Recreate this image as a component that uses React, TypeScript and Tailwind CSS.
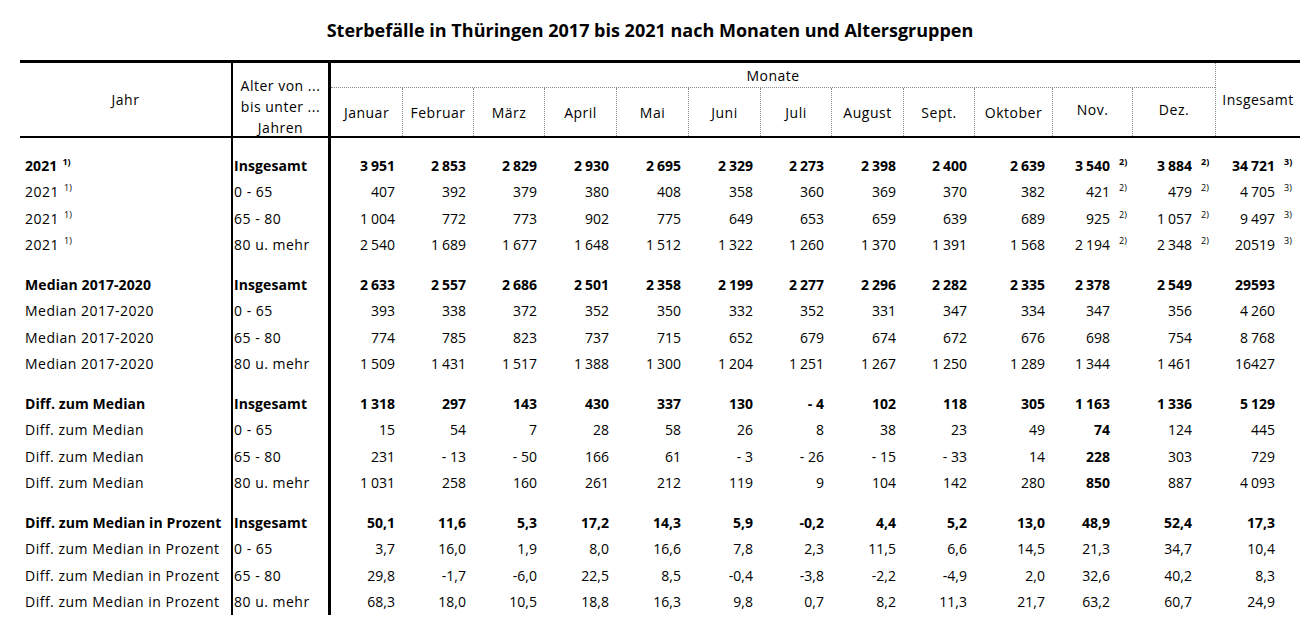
import React from 'react'

// Spaltenbreiten (Januar enthält die dicke Trennlinie)
const colW = [
  'w-[74px]', 'w-[71px]', 'w-[71px]', 'w-[72px]', 'w-[72px]', 'w-[72px]', 'w-[71px]',
  'w-[72px]', 'w-[71px]', 'w-[78px]', 'w-[80px]', 'w-[83px]', 'w-[85px]',
]
const headW = [
  'w-[71px]', 'w-[71px]', 'w-[71px]', 'w-[72px]', 'w-[72px]', 'w-[72px]', 'w-[71px]',
  'w-[72px]', 'w-[71px]', 'w-[78px]', 'w-[80px]', 'w-[83px]',
]
const noteW = ['w-[22px]', 'w-[23px]', 'w-[25px]']

const months = ['Januar', 'Februar', 'März', 'April', 'Mai', 'Juni', 'Juli', 'August', 'Sept.', 'Oktober', 'Nov.', 'Dez.']

type Row = { jahr: string; note?: boolean; alter: string; values: string[]; notes?: boolean; boldCols?: number[] }
type Group = Row[]

const ages = ['Insgesamt', '0 - 65', '65 - 80', '80 u. mehr']

const make = (jahr: string, data: string[][], opts: { note?: boolean; notes?: boolean; boldCols?: number[] } = {}): Group =>
  data.map((values, i) => ({
    jahr,
    alter: ages[i],
    values,
    note: opts.note,
    notes: opts.notes,
    boldCols: i > 0 ? opts.boldCols : undefined,
  }))

const groups: Group[] = [
  make('2021', [
    ['3_951', '2_853', '2_829', '2_930', '2_695', '2_329', '2_273', '2_398', '2_400', '2_639', '3_540', '3_884', '34_721'],
    ['407', '392', '379', '380', '408', '358', '360', '369', '370', '382', '421', '479', '4_705'],
    ['1_004', '772', '773', '902', '775', '649', '653', '659', '639', '689', '925', '1_057', '9_497'],
    ['2_540', '1_689', '1_677', '1_648', '1_512', '1_322', '1_260', '1_370', '1_391', '1_568', '2_194', '2_348', '20519'],
  ], { note: true, notes: true }),
  make('Median 2017-2020', [
    ['2_633', '2_557', '2_686', '2_501', '2_358', '2_199', '2_277', '2_296', '2_282', '2_335', '2_378', '2_549', '29593'],
    ['393', '338', '372', '352', '350', '332', '352', '331', '347', '334', '347', '356', '4_260'],
    ['774', '785', '823', '737', '715', '652', '679', '674', '672', '676', '698', '754', '8_768'],
    ['1_509', '1_431', '1_517', '1_388', '1_300', '1_204', '1_251', '1_267', '1_250', '1_289', '1_344', '1_461', '16427'],
  ]),
  make('Diff. zum Median', [
    ['1_318', '297', '143', '430', '337', '130', '- 4', '102', '118', '305', '1_163', '1_336', '5_129'],
    ['15', '54', '7', '28', '58', '26', '8', '38', '23', '49', '74', '124', '445'],
    ['231', '- 13', '- 50', '166', '61', '- 3', '- 26', '- 15', '- 33', '14', '228', '303', '729'],
    ['1_031', '258', '160', '261', '212', '119', '9', '104', '142', '280', '850', '887', '4_093'],
  ], { boldCols: [10] }),
  make('Diff. zum Median in Prozent', [
    ['50,1', '11,6', '5,3', '17,2', '14,3', '5,9', '-0,2', '4,4', '5,2', '13,0', '48,9', '52,4', '17,3'],
    ['3,7', '16,0', '1,9', '8,0', '16,6', '7,8', '2,3', '11,5', '6,6', '14,5', '21,3', '34,7', '10,4'],
    ['29,8', '-1,7', '-6,0', '22,5', '8,5', '-0,4', '-3,8', '-2,2', '-4,9', '2,0', '32,6', '40,2', '8,3'],
    ['68,3', '18,0', '10,5', '18,8', '16,3', '9,8', '0,7', '8,2', '11,3', '21,7', '63,2', '60,7', '24,9'],
  ]),
]

function Num({ v }: { v: string }) {
  const parts = v.split('_')
  return (
    <span>
      {parts.map((p, i) => (
        <React.Fragment key={i}>
          {i > 0 && <span className="inline-block w-[3px]" />}
          {p}
        </React.Fragment>
      ))}
    </span>
  )
}

function Sup({ children }: { children: React.ReactNode }) {
  return <span className="relative -top-[6px] text-[9px] leading-none tracking-normal">{children}</span>
}

function Line({ row, first }: { row: Row; first?: boolean }) {
  const track = first ? 'tracking-[0.1px]' : 'tracking-[0.5px]'
  return (
    <div className={`flex h-[26.5px] items-stretch whitespace-nowrap ${first ? 'font-bold' : ''}`}>
      <div className={`flex w-[211px] items-center pl-[5px] ${track}`}>
        {row.jahr}
        {row.note && <span className="ml-[5px]"><Sup>1)</Sup></span>}
      </div>
      <div className={`flex w-[97px] items-center border-l-2 border-black pl-px ${track}`}>{row.alter}</div>
      {colW.map((w, i) => {
        const isBold = row.boldCols?.includes(i)
        return (
          <div
            key={i}
            className={`flex ${w} items-center justify-end ${i === 0 ? 'border-l-[3px] border-black' : ''} ${i < 10 ? 'pr-[7px]' : ''} ${isBold ? 'font-bold' : ''}`}
          >
            <Num v={row.values[i]} />
            {i >= 10 && (
              <span className={`inline-block ${noteW[i - 10]} pl-[9px] text-left`}>
                {row.notes && <Sup>{i === 12 ? '3)' : '2)'}</Sup>}
              </span>
            )}
          </div>
        )
      })}
    </div>
  )
}

function Spacer({ h }: { h: string }) {
  return (
    <div className={`flex ${h}`}>
      <div className="w-[211px]" />
      <div className="w-[97px] border-l-2 border-black" />
      <div className="w-[74px] border-l-[3px] border-black" />
    </div>
  )
}

export default function App() {
  return (
    <div className="h-[619px] w-[1316px] overflow-hidden bg-white font-['Open_Sans',sans-serif] text-[14px] text-black">
      <div className="flex h-[60px] items-center justify-center pr-[16px] text-[18px] font-bold">
        Sterbefälle in Thüringen 2017 bis 2021 nach Monaten und Altersgruppen
      </div>

      <div className="ml-[20px] w-[1280px]">
        {/* Kopf */}
        <div className="flex h-[78px] border-t-[3px] border-b-2 border-black tracking-[0.5px]">
          <div className="flex w-[211px] items-center justify-center">Jahr</div>
          <div className="flex w-[97px] flex-col items-center border-l-2 border-black pt-[12px] leading-[21px]">
            <span>Alter von ...</span>
            <span>bis unter ...</span>
            <span>Jahren</span>
          </div>
          <div className="flex w-[887px] flex-col border-l-[3px] border-black">
            <div className="flex h-[25px] items-center justify-center border-b border-dotted border-[#8a8a8a]">Monate</div>
            <div className="flex flex-1">
              {months.map((m, i) => (
                <div
                  key={m}
                  className={`flex ${headW[i]} items-center justify-center ${i > 0 ? 'border-l border-dotted border-[#8a8a8a]' : ''} ${i >= 10 ? 'pb-[5px]' : ''}`}
                >
                  {m}
                </div>
              ))}
            </div>
          </div>
          <div className="flex w-[85px] items-center justify-center border-l border-dotted border-[#8a8a8a]">Insgesamt</div>
        </div>

        {/* Daten */}
        {groups.map((g, gi) => (
          <React.Fragment key={gi}>
            <Spacer h={gi === 0 ? 'h-[14px]' : 'h-[13px]'} />
            {g.map((r, ri) => (
              <Line key={ri} row={r} first={ri === 0} />
            ))}
          </React.Fragment>
        ))}
      </div>
    </div>
  )
}
